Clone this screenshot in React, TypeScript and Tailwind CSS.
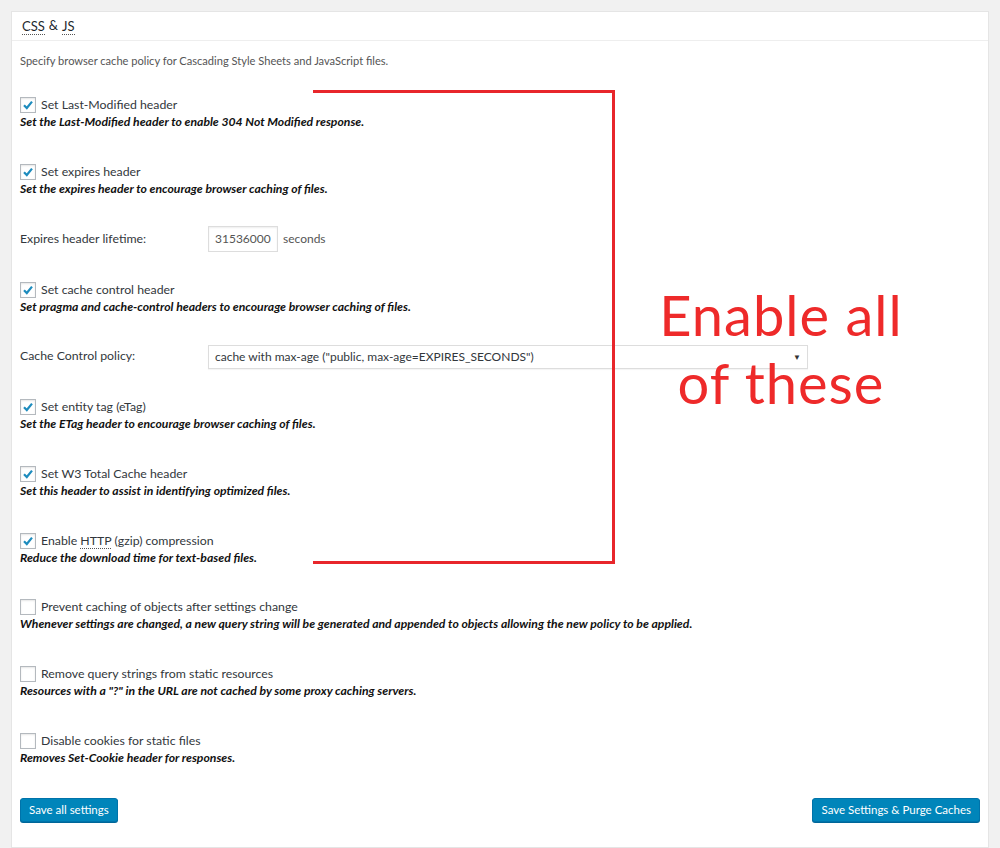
import React from "react";

type Item = { label: React.ReactNode; desc: string; checked: boolean; mt: string };

const Check = ({ checked }: { checked: boolean }) => (
  <span className="w-4 h-4 border border-[#b4b9be] bg-white shadow-[inset_0_1px_2px_rgba(0,0,0,0.1)] flex items-center justify-center shrink-0">
    {checked && (
      <svg width="14" height="14" viewBox="0 0 14 14">
        <path d="M3 7.2 L5.8 10 L11 3.6" fill="none" stroke="#1e8cbe" strokeWidth="2.2" />
      </svg>
    )}
  </span>
);

const CheckRow = ({ item }: { item: Item }) => (
  <div className={item.mt}>
    <div className="flex items-center gap-[5px] h-[18px] text-[12.3px] text-[#32373c]">
      <Check checked={item.checked} />
      <span>{item.label}</span>
    </div>
    <p className="h-4 leading-4 text-[12.2px] font-bold italic text-[#111]">{item.desc}</p>
  </div>
);

const top: Item[] = [
  { label: "Set Last-Modified header", desc: "Set the Last-Modified header to enable 304 Not Modified response.", checked: true, mt: "mt-[26px]" },
  { label: "Set expires header", desc: "Set the expires header to encourage browser caching of files.", checked: true, mt: "mt-[33px]" },
];

const tail: Item[] = [
  { label: "Set entity tag (eTag)", desc: "Set the ETag header to encourage browser caching of files.", checked: true, mt: "mt-[30px]" },
  { label: "Set W3 Total Cache header", desc: "Set this header to assist in identifying optimized files.", checked: true, mt: "mt-[33px]" },
  {
    label: (
      <>
        Enable <abbr className="no-underline border-b border-dotted border-[#555]">HTTP</abbr> (gzip) compression
      </>
    ),
    desc: "Reduce the download time for text-based files.",
    checked: true,
    mt: "mt-[33px]",
  },
  { label: "Prevent caching of objects after settings change", desc: "Whenever settings are changed, a new query string will be generated and appended to objects allowing the new policy to be applied.", checked: false, mt: "mt-[32px]" },
  { label: "Remove query strings from static resources", desc: "Resources with a \"?\" in the URL are not cached by some proxy caching servers.", checked: false, mt: "mt-[33px]" },
  { label: "Disable cookies for static files", desc: "Removes Set-Cookie header for responses.", checked: false, mt: "mt-[33px]" },
];

const Btn = ({ children }: { children: React.ReactNode }) => (
  <button className="h-[24px] px-[8px] bg-[#0085ba] border border-[#0073aa] rounded-[3px] text-white text-[11.5px] shadow-[0_1px_0_#006799]">
    {children}
  </button>
);

export default function App() {
  return (
    <div className="bg-[#f1f1f1] min-h-[848px] pt-[11px] pl-[11px] pr-[11px] font-['Lato','Open_Sans',sans-serif] text-[#444]">
      <div className="relative bg-white border border-[#e5e5e5] h-[837px]">
        <div className="h-[29px] border-b border-[#eee] pl-[10px] flex items-center text-[13px] text-[#23282d]">
          <abbr className="no-underline border-b border-dotted border-[#555] leading-[16px]">CSS</abbr>
          <span className="mx-[4px]">&amp;</span>
          <abbr className="no-underline border-b border-dotted border-[#555] leading-[16px]">JS</abbr>
        </div>
        <div className="pl-[8px] pr-[8px]">
          <p className="mt-[11px] h-[18px] leading-[18px] text-[11.1px] text-[#555]">
            Specify browser cache policy for Cascading Style Sheets and JavaScript files.
          </p>
          {top.map((it, i) => (
            <CheckRow key={i} item={it} />
          ))}
          <div className="mt-[29px] flex items-center h-[26px] text-[12.3px] text-[#32373c]">
            <span className="w-[188px]">Expires header lifetime:</span>
            <span className="w-[70px] h-[26px] border border-[#ddd] shadow-[inset_0_1px_2px_rgba(0,0,0,0.07)] px-[6px] flex items-center text-[#555] text-[12px]">
              31536000
            </span>
            <span className="ml-[5px] text-[12px] text-[#555]">seconds</span>
          </div>
          <CheckRow
            item={{
              label: "Set cache control header",
              desc: "Set pragma and cache-control headers to encourage browser caching of files.",
              checked: true,
              mt: "mt-[29px]",
            }}
          />
          <div className="mt-[30px] flex items-center h-[23px] text-[12.3px] text-[#32373c]">
            <span className="w-[188px]">Cache Control policy:</span>
            <span className="w-[600px] h-[24px] border border-[#ddd] shadow-[0_1px_1px_rgba(0,0,0,0.04)] pl-[6px] pr-[6px] flex items-center justify-between text-[12px] text-[#32373c]">
              <span>cache with max-age ("public, max-age=EXPIRES_SECONDS")</span>
              <span className="text-[8px] leading-[8px] text-[#333]">▼</span>
            </span>
          </div>
          {tail.map((it, i) => (
            <CheckRow key={i} item={it} />
          ))}
          <div className="mt-[32px] flex justify-between">
            <Btn>Save all settings</Btn>
            <Btn>Save Settings &amp; Purge Caches</Btn>
          </div>
        </div>

        {/* red annotation bracket */}
        <div className="absolute left-[301px] top-[78px] w-[302px] h-[474px] border-t-[3px] border-r-[3px] border-b-[3px] border-[#e8262b]" />
        <div className="absolute left-[619px] top-[281px] w-[300px] text-center text-[#ee2a2a] text-[56px] tracking-[1px] font-['Lato',sans-serif]">
          <div className="leading-[44px]">Enable all</div>
          <div className="leading-[40px] mt-[26px]">of these</div>
        </div>
      </div>
    </div>
  );
}
